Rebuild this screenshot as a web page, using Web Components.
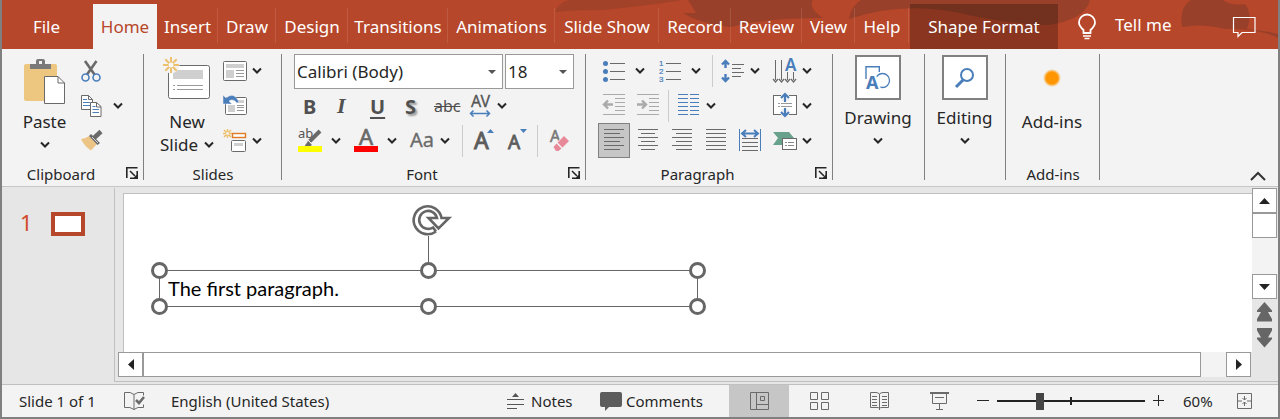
<!DOCTYPE html>
<html lang="en">
<head>
<meta charset="utf-8">
<title>Presentation editor</title>
<style>
html,body{margin:0;height:100%}
body{font-family:"Noto Sans","Open Sans",sans-serif;color:#262626;background:#e6e6e6}
</style>
</head>
<body>
<presentation-app></presentation-app>
<script>
const define = (name, html) => customElements.define(name, class extends HTMLElement {
  connectedCallback() {
    if (this.shadowRoot) return;
    const t = document.createElement('template');
    t.innerHTML = typeof html === 'function' ? html(this) : html;
    this.attachShadow({mode: 'open'}).append(t.content.cloneNode(true));
  }
});

const reset = `*{box-sizing:border-box}button{font:inherit;color:inherit;background:none;border:0;margin:0;padding:0}`;
const G = '#6a6a6a', B = '#4a7ebb', D = '#262626';
const hl = (list, c) => `<path d="${list.map(([x, y, w]) => `M${x} ${y}.5h${w}`).join('')}" stroke="${c || G}" fill="none"/>`;

/* name: [width, height, markup] */
const icons = {
  chev: [10, 6, `<path d="M1 .5l4 4 4-4" fill="none" stroke="${D}" stroke-width="2"/>`],
  collapse: [16, 10, `<path d="M1 9l7-7 7 7" fill="none" stroke="#333" stroke-width="2"/>`],
  launch: [12, 12, `<path d="M.8 11V.8h10.700" fill="none" stroke="${D}" stroke-width="1.6"/><path d="M4 4l5 5" stroke="${D}" stroke-width="1.6"/><path d="M12 4v8H4v-1.6h4L10.4 8V4z" fill="${D}"/>`],
  paste: [42, 46, `<rect y="5" width="33" height="37" rx="2" fill="#edc77f"/><path d="M6 5h6V2q0-2 2-2h5q2 0 2 2v3h6v5H6z" fill="#7a7a7a"/><rect x="15" y="2" width="3" height="3" fill="#f3f3f3"/><path d="M20.500 17.500H34L40.500 24V44.500H20.500z" fill="#fff" stroke="${G}"/><path d="M34 17.500V24h6.500" fill="none" stroke="${G}"/>`],
  cut: [20, 24, `<path d="M4 2l9.500 13.500M15.500 2L6 15.500" stroke="${G}" stroke-width="2.600"/><circle cx="4.500" cy="18.500" r="3.500" fill="none" stroke="${B}" stroke-width="1.600"/><circle cx="15.500" cy="18.500" r="3.500" fill="none" stroke="${B}" stroke-width="1.600"/>`],
  copy: [21, 23, `<path d="M.5 1.500h7l4 4V15.500H.5z" fill="#fff" stroke="${G}"/><path d="M7.500 1.500v4h4" fill="none" stroke="${G}"/><path d="M2 5.500h4M2 8.500h7M2 11.500h7" stroke="${B}"/><path d="M9.500 8.500h6l4.500 4V22.500H9.500z" fill="#fff" stroke="${G}"/><path d="M15.500 8.500v4.500H20" fill="none" stroke="${G}"/><path d="M11.500 12.500h3M11.500 15.500h6.500M11.500 18.500h6.500" stroke="${B}"/>`],
  brush: [23, 21, `<path d="M0 9q4 0 8-3l8 8q-2 2-6 6.500Q3 16 0 9z" fill="#ecc486"/><path d="M8 6l2-2 9 9-2.500 2z" fill="${G}"/><path d="M13 8L20 1.500" stroke="${G}" stroke-width="4.500"/><path d="M11 7l6 6" stroke="#f3f3f3" stroke-width=".8"/>`],
  newSlide: [48, 42, `<rect x="5.500" y="8.500" width="41" height="33" rx="2" fill="#fff" stroke="${G}"/><rect x="10" y="13" width="30" height="9" fill="#cfcfcf"/><path d="M10 28.500h2M14 28.500h26M10 32.500h2M14 32.500h26" stroke="#9a9a9a"/><circle cx="8" cy="8" r="8.500" fill="#f3f3f3"/><path d="M8 0v16M0 8h16M2.300 2.300l11.400 11.400M13.700 2.300L2.300 13.700" stroke="#edc06e" stroke-width="2"/><circle cx="8" cy="8" r="2.500" fill="#f8f8f8"/>`],
  layout: [24, 20, `<rect x=".5" y=".5" width="23" height="19" rx="1" fill="#fff" stroke="${G}"/><rect x="3" y="3" width="18" height="4" fill="#cfcfcf"/><rect x="3" y="9" width="8" height="8" fill="#cfcfcf"/>${hl([[13,9,8],[13,12,8],[13,15,8]], '#999')}`],
  reset: [24, 21, `<rect x="2.500" y="2.500" width="21" height="17" rx="1" fill="#fff" stroke="${G}"/><rect x="13" y="5" width="8" height="3" fill="#cfcfcf"/><rect x="5" y="10" width="7" height="7" fill="#cfcfcf"/>${hl([[14,10,7],[14,12,7],[14,15,7]], '#999')}<path d="M0 0v9h9L6 6q4-3 8 2l2-1Q11-4 3 3z" fill="${B}" stroke="#f3f3f3" stroke-width=".5"/>`],
  section: [24, 23, `<path d="M4.500 0v9M0 4.500h9M1 1l7 7M8 1L1 8" stroke="#edc06e" stroke-width="1.500"/><circle cx="4.500" cy="4.500" r="1.500" fill="#f3f3f3"/><rect x="9.500" y="4.500" width="13" height="4" fill="#fff" stroke="#e07b28" stroke-width="1.400"/><rect x="8.500" y="11.500" width="14" height="11" rx="1" fill="#fff" stroke="${G}"/><rect x="11" y="14" width="9" height="3" fill="#cfcfcf"/>`],
  spacing: [24, 22, `<text x="11.500" y="12" font-size="16" text-anchor="middle" fill="#555" stroke="#555" stroke-width=".3">AV</text><path d="M1 18.500h20M4.500 15.500l-3 3 3 3M17.500 15.500l3 3-3 3" fill="none" stroke="${B}" stroke-width="1.500"/>`],
  highlight: [24, 23, `<text x="0" y="9" font-size="13" fill="#555">ab</text><path d="M6 18l4-6 4 4-5 3z" fill="${G}"/><path d="M11 13L22 2" stroke="${G}" stroke-width="4"/><path d="M10 11l5 5" stroke="#f3f3f3"/><rect y="17" width="24" height="6" fill="#ff0"/>`],
  fontColor: [24, 23, `<text x="12" y="16" font-size="22" text-anchor="middle" fill="${G}" stroke="${G}" stroke-width=".7">A</text><rect y="17" width="24" height="6" fill="#f00"/>`],
  caseIcon: [26, 23, `<text x="0" y="18" font-size="20" fill="${G}" stroke="${G}" stroke-width=".3">Aa</text>`],
  grow: [20, 23, `<text x="0" y="20" font-size="23" fill="#5c5c5c" stroke="#5c5c5c" stroke-width=".9">A</text><path d="M13 4l3.500-4L20 4z" fill="${B}"/>`],
  shrink: [20, 23, `<text x="0" y="20" font-size="19" fill="#5c5c5c" stroke="#5c5c5c" stroke-width=".8">A</text><path d="M12 0h7l-3.500 4z" fill="${B}"/>`],
  clear: [20, 23, `<text x="0" y="13" font-size="16" fill="#777" stroke="#777" stroke-width=".5">A</text><path d="M3 17L14 6l6 6-11 11z" fill="#f3f3f3"/><path d="M7.500 13.500L14 7l5 5-6.500 6.500zM6.500 14.500l5 5-3 2.500H6L3.500 18z" fill="#e8899a"/>`],
  bullets: [24, 24, `<g fill="${B}"><circle cx="2.500" cy="4.500" r="2.500"/><circle cx="2.500" cy="12.500" r="2.500"/><circle cx="2.500" cy="20.500" r="2.500"/></g>${hl([[7,4,15],[7,12,15],[7,20,15]])}`],
  numbers: [24, 24, `<g fill="${B}" stroke="${B}" stroke-width=".2" font-size="8" font-family="Liberation Sans"><text y="7">1</text><text y="15">2</text><text y="23">3</text></g>${hl([[7,4,15],[7,12,15],[7,20,15]])}`],
  lineSpace: [24, 24, `<path d="M4.500 2v7M4.500 15v7M1 5.500L4.500 2 8 5.500M1 18.500L4.500 22 8 18.500" stroke="${B}" stroke-width="2.400" fill="none"/>${hl([[11,5,12],[11,9,9],[11,13,12],[11,17,9]])}`],
  direction: [24, 24, `<path d="M2.500 1v20M8.500 1v20M14.500 13v8M20.500 13v8" stroke="${G}"/><path d="M0 20l2.500 3L5 20M6 20l2.500 3L11 20M12 20l2.500 3L17 20M18 20l2.500 3L23 20" stroke="${G}" fill="none" stroke-width="1.300"/><text x="12" y="12" font-size="17" font-weight="600" fill="${B}">A</text>`],
  outdent: [23, 23, `${hl([[0,0,22],[12,4,10],[12,8,10],[12,12,10],[12,16,10],[0,20,22]], '#aaa')}<path d="M1 10.500h9M5 6.500l-4 4 4 4" stroke="#aaa" stroke-width="2.400" fill="none"/>`],
  indent: [23, 23, `${hl([[0,0,22],[12,4,10],[12,8,10],[12,12,10],[12,16,10],[0,20,22]], '#aaa')}<path d="M0 10.500h8M5 6.500l4 4-4 4" stroke="#aaa" stroke-width="2.400" fill="none"/>`],
  columns: [22, 23, hl([0,4,8,12,16,20].flatMap(y => [[0,y,10],[12,y,9]]), B)],
  vAlign: [24, 25, `<rect x=".5" y="2.500" width="23" height="19" fill="#fff" stroke="${G}"/>${hl([[5,10,2],[8,10,11],[5,13,2],[8,13,11]], '#999')}<path d="M8 0h8v8H8zM8 16h8v8H8z" fill="#f3f3f3"/><path d="M12 1v8M12 15v8M8 5l4-4 4 4M8 19l4 4 4-4" stroke="${B}" stroke-width="2.200" fill="none"/>`],
  left: [20, 22, hl([[0,0,20],[0,4,16],[0,8,20],[0,12,16],[0,16,20],[0,20,16]])],
  center: [20, 23, hl([[0,0,20],[3,4,14],[0,8,20],[3,12,14],[0,16,20],[3,20,14]])],
  right: [20, 23, hl([[0,0,20],[4,4,16],[0,8,20],[4,12,16],[0,16,20],[4,20,16]])],
  justify: [20, 23, hl([[0,0,20],[0,4,20],[0,8,20],[0,12,20],[0,16,20],[0,20,20]])],
  distribute: [22, 23, `<path d="M.5 0v22M21.500 0v22" stroke="${B}"/><path d="M3 4.500h16M7 1L3 4.500 7 8M15 1l4 3.500L15 8" stroke="${B}" stroke-width="2" fill="none"/>${hl([[3,9,16],[3,13,16],[3,17,16],[3,21,16]])}`],
  smartArt: [24, 19, `<path d="M0 1h16l5 6-5 7H0l5-7z" fill="#68a18c"/><rect x="9.500" y="7.500" width="14" height="11" fill="#fff" stroke="${G}"/>${hl([[12,11,2],[15,11,6],[12,14,2],[15,14,6]], '#888')}`],
  drawing: [24, 24, `<path d="M0 13V.7h13.300V6" fill="none" stroke="${B}" stroke-width="1.400"/><circle cx="16.500" cy="14.500" r="7" fill="none" stroke="${B}" stroke-width="1.300"/><path d="M0 23L4 9h6l5 14z" fill="#fff"/><text x="0" y="23" font-size="18" font-weight="700" fill="${B}">A</text>`],
  search: [20, 20, `<circle cx="12" cy="7" r="6" fill="none" stroke="${B}" stroke-width="2"/><path d="M8 12l-7 7" stroke="${B}" stroke-width="3"/>`],
  dot: [18, 18, `<defs><radialGradient id="g"><stop offset=".65" stop-color="#ff9500"/><stop offset="1" stop-color="#ff9500" stop-opacity="0"/></radialGradient></defs><circle cx="9" cy="9" r="9" fill="url(#g)"/>`],
  bulb: [18, 26, `<path d="M5.500 19v-3Q1 12 1 8.500a8 8 0 0116 0Q17 12 12.500 16v3z" fill="none" stroke="#fff" stroke-width="1.800"/><path d="M5 22h8M6.500 24.500h5" stroke="#fff" stroke-width="1.600"/>`],
  bubble: [23, 20, `<path d="M.5.500h21.500v15H9l-4 4v-4H.5z" fill="none" stroke="#fff" stroke-width="1.200"/>`],
  proof: [21, 18, `<path d="M10 2.500Q7-.5.500.5v15q6-1 9.500 2 3-3 9.500-2v-3M10 2.500v15M10 2.500Q13-.5 19.500.5v3" fill="none" stroke="${G}"/><path d="M12 8l3 3 5-6" fill="none" stroke="${G}" stroke-width="2.600"/>`],
  notes: [17, 17, `<path d="M5 4l3.500-4L12 4z" fill="#555"/>${hl([[0,6,17],[0,11,17],[0,15,10]], '#555')}`],
  comment: [22, 19, `<path d="M2 0h18q2 0 2 2v11q0 2-2 2H9l-4 4v-4H2q-2 0-2-2V2q0-2 2-2z" fill="#5c5c5c"/>`],
  normal: [19, 18, `<path d="M.5.500h18v17H.500zM6.500.500v17M6.500 12.500h12M10.500 4.500h4v4h-4z" fill="none" stroke="${G}"/>`],
  sorter: [19, 18, `<path d="M.5.500h7v7h-7zM11.500.500h7v7h-7zM.5 10.500h7v7h-7zM11.500 10.500h7v7h-7z" fill="none" stroke="${G}"/>`],
  reading: [19, 18, `<path d="M9.500 2Q8 .500 6 .500H.5v15H7q2 0 2.500 1Q10 15.500 12 15.500h6.500V.500H13Q11 .500 9.500 2zV18M2 4.500h5M2 7.500h5M2 10.500h5M2 13.500h5M12 4.500h5M12 7.500h5M12 10.500h5M12 13.500h5" fill="none" stroke="${G}"/>`],
  show: [19, 18, `<path d="M0 1h19" stroke="${G}" stroke-width="2"/><path d="M2.500 2v9.500h14V2M5 5.500h9M9.500 11.500v6M6 17.500h7" fill="none" stroke="${G}"/>`],
  minus: [12, 12, `<path d="M0 5.500h12" stroke="${D}"/>`],
  plus: [12, 12, `<path d="M0 5.500h11M5.500 0v11" stroke="${D}"/>`],
  fit: [15, 16, `<path d="M.5.500h14v15H.500zM7.500 3v4M5.500 5l2 2 2-2M7.500 13V9M5.500 11l2-2 2 2M1 8h4M10 8h4" fill="none" stroke="${G}"/>`],
  up: [11, 6, `<path d="M0 6l5.500-6L11 6z" fill="#222"/>`],
  down: [11, 6, `<path d="M0 0h11L5.500 6z" fill="#222"/>`],
  prev: [6, 11, `<path d="M6 0v11L0 5.500z" fill="#222"/>`],
  next: [6, 11, `<path d="M0 0v11l6-5.500z" fill="#222"/>`],
  prevSlide: [15, 20, `<path d="M7.500 0L15 8.500V10h-4l4 7v2.500H0V17l4-7H0V8.500z" fill="#666"/>`],
  nextSlide: [15, 20, `<path d="M7.500 19.500L15 11V9.500h-4l4-7V0H0v2.500l4 7H0V11z" fill="#666"/>`],
  rotate: [40, 33, `<g fill="none"><circle cx="16" cy="16" r="11.500" stroke="#fff" stroke-width="9"/><path d="M24 27.500A14 14 0 1 1 29.500 14H37L26.500 24.500 16.500 14H25A9 9 0 1 0 21 23.500L24 27.500" stroke="#666" stroke-width="2.600"/></g>`]
};
define('ui-icon', el => {
  const [w, h, body] = icons[el.getAttribute('name')];
  return `<style>:host{display:inline-block;flex:none;line-height:0}svg{display:block;overflow:visible}</style>
  <svg width="${w}" height="${h}" viewBox="0 0 ${w} ${h}" aria-hidden="true">${body}</svg>`;
});
const ic = n => `<ui-icon name="${n}"></ui-icon>`;
const ib = (n, label) => `<button type="button" aria-label="${label || n}">${ic(n)}</button>`;
const chev = ib('chev', 'More');

define('ribbon-tabs', `<style>${reset}
:host{display:block;position:relative;background:#b7472a;color:#fff;font-size:17px;line-height:24px;overflow:hidden}
.art{position:absolute;top:0;right:0}
nav{position:relative;display:grid;height:49px;align-items:stretch;
grid-template-columns:89px 66px 61px 58px 72px 100px 107px 104px 72px 71px 53px 54px 149px 1fr 24px 22px}
nav>button{margin-top:4px;white-space:nowrap;display:flex;align-items:center;justify-content:center}
.line{background:linear-gradient(#ffffff1c,#ffffff1c) right 4px/1px 35px no-repeat}
.on{background:#f3f3f3;color:#b7472a;margin-left:2px}
.ctx{background:#00000040;margin-left:1px}
.tell{justify-self:start;gap:19px;padding-left:20px}
.tell span{padding-bottom:3px}
</style>
<svg class="art" width="780" height="49" viewBox="500 0 780 49" aria-hidden="true"><g fill="#98402a">
<path d="M557 12Q562 0 575 0h110q-30 5-80 10-30 0-48 2z" opacity=".7"/>
<path d="M690 0h125q-5 8 10 18-60 0-92 9-30-3-48-14 15 0 13 0-3-5-8-13z"/>
<path d="M851 19Q853 6 863 0h229q-5 20-42 25-36-1-75-9Q910-1 851 19z"/>
<path d="M1184 27q-3-20 9-27h32q8 6 22 4 8 10 2 25 20 2 31 5v4q-20-10-53-9-22-6-43-2z"/></g></svg>
<nav role="tablist"><button role="tab">File</button><button class="on" role="tab" aria-selected="true">Home</button>
${['Insert','Draw','Design','Transitions','Animations','Slide Show','Record','Review','View','Help'].map(t => `<button class="line" role="tab">${t}</button>`).join('')}
<button class="ctx" role="tab">Shape Format</button><button class="tell">${ic('bulb')}<span>Tell me</span></button><button aria-label="Comments">${ic('bubble')}</button></nav>`);

define('ribbon-group', el => `<style>${reset}
:host{display:flex;flex-direction:column;flex:none;height:132px;background:linear-gradient(#808080,#808080) right top/1px 126px no-repeat}
.body{height:105px;display:flex}
footer{height:27px;display:flex;justify-content:center;align-items:center;font-size:15px;line-height:20px;padding-top:3px;position:relative}
:host([launcher]) footer{padding-right:24px}
.launch{position:absolute;right:6px;top:8px;line-height:0}
</style><div class="body"><slot></slot></div><footer>${el.getAttribute('label') || ''}${el.hasAttribute('launcher') ? `<button class="launch" aria-label="More options">${ic('launch')}</button>` : ''}</footer>`);

define('big-button', el => `<style>${reset}
:host{display:block}
button{width:100%;display:flex;flex-direction:column;align-items:center;font-size:17px;line-height:23px;white-space:nowrap}
.pic{height:56px;display:flex;align-items:center;justify-content:center}
:host([raised]) .pic{padding-bottom:8px}
:host([boxed]) .pic{width:46px;height:45px;background:#fff;border:2px solid #808080;margin:1px 0 6px}
.second{display:flex;align-items:center;justify-content:center;gap:6px;height:23px}
</style><button type="button"><span class="pic">${ic(el.getAttribute('icon'))}</span><span>${el.getAttribute('label')}</span>
${el.hasAttribute('single') ? '' : `<span class="second">${el.hasAttribute('second') ? `<span>${el.getAttribute('second')}</span>` : ''}${ic('chev')}</span>`}</button>`);

define('ribbon-bar', `<style>${reset}
:host{display:flex;padding-top:5px;background:#f3f3f3;border-bottom:1px solid #c6c6c6}
.row{display:grid;height:35px;align-items:center}
.row button,.row ui-icon{display:flex;align-items:center;width:max-content}
.tool .row{grid-template-columns:29px 10px}
.clip{width:142px}.slides{width:138px}.font{width:304px}.para{width:247px}.draw{width:92px}.edit{width:81px}.add{width:94px}
.clip big-button{width:69px;margin:0 2px 0 8px}
.clip .row{grid-template-columns:32px 10px}
.slides big-button{width:68px;margin:0 2px 0 9px}
.draw big-button,.edit big-button,.add big-button{width:100%;padding-right:2px}
.fields{display:flex;gap:2px;height:35px;padding-left:12px}
select{appearance:none;font:17px "Noto Sans",sans-serif;color:#262626;border:1px solid #999;border-radius:0;background:#fff;height:35px;padding:0 2px;margin:0}
.select{display:grid}
.select::after{content:"";grid-area:1/1;justify-self:end;align-self:center;border:4px solid transparent;border-top-color:#555;border-bottom:0;margin-right:7px}
.select select{grid-area:1/1}
.name{width:209px}.size{width:69px}
.row.f2{grid-template-columns:34px 33px 35px 29px 35px 28px 10px;padding-left:21px;font-size:20px;color:#505050}
.row.short{height:34px}
.f2 button{height:30px}
.f3{grid-template-columns:33px 23px 33px 23px 30px 22px 12px 34px 29px 13px 20px;padding-left:16px}
.sep{width:1px;height:32px;background:#ccc}
.b{font-weight:700}.i{font-family:"Liberation Serif",serif;font-style:italic;font-weight:700;font-size:22px}.u{text-decoration:underline;text-underline-offset:3px}.s{font-weight:700;text-shadow:2px 2px 2px #999}.x{font-size:16px;text-decoration:line-through}
.p1{grid-template-columns:32px 24px 32px 21px 9px 29px 23px 29px 10px;padding-left:17px}
.p2{grid-template-columns:34px 31px 10px 28px 67px 29px 10px;padding-left:17px}
.p3{grid-template-columns:40px 34px 34px 33px 34px 29px 10px;padding-left:12px}
.row .sel{width:32px;height:35px;background:#c6c6c6;border:1px solid #808080;justify-content:center;padding-bottom:1px}
.collapse{margin:auto 12px 5px auto;line-height:0}
</style>
<ribbon-group class="clip" label="Clipboard" launcher><big-button icon="paste" label="Paste"></big-button>
<div class="tool"><div class="row short">${ib('cut')}</div><div class="row">${ib('copy')}${chev}</div><div class="row">${ib('brush', 'Format painter')}</div></div></ribbon-group>
<ribbon-group class="slides" label="Slides"><big-button raised icon="newSlide" label="New" second="Slide"></big-button>
<div class="tool"><div class="row short">${ib('layout')}${chev}</div><div class="row">${ib('reset')}</div><div class="row">${ib('section')}${chev}</div></div></ribbon-group>
<ribbon-group class="font" label="Font" launcher><div>
<div class="fields"><span class="select"><select class="name" aria-label="Font"><option>Calibri (Body)</option></select></span><span class="select"><select class="size" aria-label="Font size"><option>18</option></select></span></div>
<div class="row short f2"><button class="b">B</button><button class="i">I</button><button class="u b">U</button><button class="s">S</button><button class="x">abc</button>${ib('spacing')}${chev}</div>
<div class="row f3">${ib('highlight')}${chev}${ib('fontColor')}${chev}${ib('caseIcon')}${chev}<i class="sep"></i>${ib('grow')}${ib('shrink')}<i class="sep"></i>${ib('clear')}</div>
</div></ribbon-group>
<ribbon-group class="para" label="Paragraph" launcher><div>
<div class="row short p1">${ib('bullets')}${chev}${ib('numbers')}${chev}<i class="sep"></i>${ib('lineSpace')}${chev}${ib('direction')}${chev}</div>
<div class="row p2">${ib('outdent')}${ib('indent')}<i class="sep"></i>${ib('columns')}${chev}${ib('vAlign')}${chev}</div>
<div class="row p3"><button class="sel" aria-label="Align left" aria-pressed="true">${ic('left')}</button>${ib('center')}${ib('right')}${ib('justify')}${ib('distribute')}${ib('smartArt')}${chev}</div>
</div></ribbon-group>
<ribbon-group class="draw"><big-button boxed icon="drawing" label="Drawing"></big-button></ribbon-group>
<ribbon-group class="edit"><big-button boxed icon="search" label="Editing"></big-button></ribbon-group>
<ribbon-group class="add" label="Add-ins"><big-button single raised icon="dot" label="Add-ins"></big-button></ribbon-group>
<button class="collapse" aria-label="Collapse ribbon">${ic('collapse')}</button>`);

define('text-frame', `<style>
:host{position:absolute;left:35px;top:76px;width:539px;height:37px;box-shadow:inset 0 0 0 1px #666;box-sizing:border-box}
p{margin:0;padding:6px 9px;font:20px/24px Lato,sans-serif;color:#000}
i{position:absolute;width:17px;height:17px;box-sizing:border-box;border:3px solid #666;border-radius:50%;background:#fff;margin:-8px}
.l{left:0}.c{left:calc(50% - 1px)}.r{right:0}.t{top:0}.b{bottom:0}
.stem{position:absolute;left:calc(50% - 1px);bottom:100%;height:36px;width:1px;background:#666}
.rot{position:absolute;left:calc(50% - 1px);top:-66px;margin-left:-16px}
</style><span class="stem"></span><ui-icon class="rot" name="rotate"></ui-icon><p><slot></slot></p>
<i class="l t"></i><i class="c t"></i><i class="r t"></i><i class="l b"></i><i class="c b"></i><i class="r b"></i>`);

define('slide-editor', `<style>${reset}
:host{flex:1;display:grid;grid-template-columns:112px 1fr;background:#e6e6e6;min-height:197px}
aside{display:flex;align-items:start;gap:18px;padding:21px 0 0 18px;font-size:22px;line-height:28px;color:#d04a2b}
.thumb{width:34px;height:24px;border:4px solid #b7472a;background:#fff;margin-top:4px}
.view{margin:1px 0 2px;border-left:1px solid #c0c0c0;display:grid;grid-template-columns:1fr 26px;grid-template-rows:1fr 25px 4px;padding-left:3px;min-width:0;border-bottom:1px solid #c0c0c0}
.slide{position:relative;margin:5px 0 0 5px;border:1px solid #c0c0c0;border-right:0;border-bottom:0;background:#fff}
.box{width:25px;height:25px;border:1px solid #999;background:#fff;display:flex;align-items:center;justify-content:center}
.h{display:flex;padding-right:1px}.h .t{flex:1;border:1px solid #999;background:#fff}.h .g{width:25px;background:#f3f3f3}
.v{display:flex;flex-direction:column;grid-row:1/4;grid-column:2}
.v .g{flex:none;height:36px;background:#f3f3f3}
.jump{width:25px;display:flex;justify-content:center;margin-top:3px;height:23px}
</style>
<aside><span>1</span><button class="thumb" aria-label="Slide 1"></button></aside>
<section class="view"><main class="slide"><text-frame>The first paragraph.</text-frame></main>
<div class="v"><button class="box" aria-label="Scroll up">${ic('up')}</button><span class="box"></span><span class="g"></span><button class="box" aria-label="Scroll down">${ic('down')}</button><button class="jump" aria-label="Previous slide">${ic('prevSlide')}</button><button class="jump" aria-label="Next slide">${ic('nextSlide')}</button></div>
<div class="h"><button class="box" aria-label="Scroll left">${ic('prev')}</button><span class="t"></span><span class="g"></span><button class="box" aria-label="Scroll right">${ic('next')}</button></div></section>`);

define('status-bar', `<style>${reset}
:host{display:flex;height:32px;border-top:1px solid #c0c0c0;background:#f3f3f3;font-size:15px;align-items:stretch;white-space:nowrap;line-height:32px}
button{display:flex;align-items:center}
.pages{width:122px;padding-left:17px}.lang{margin-left:26px}
.notes{margin-left:auto;gap:7px;width:93px}.comments{gap:4px;width:129px}
.view{width:60px;justify-content:center}.on{background:#c6c6c6}
.minus{margin-left:8px}
input{appearance:none;width:148px;margin:0 8px;height:32px;background:linear-gradient(#222,#222) center/2px 8px no-repeat,linear-gradient(#222,#222) center/100% 2px no-repeat}
input::-webkit-slider-thumb{appearance:none;width:8px;height:17px;background:#444}
.pct{margin-left:18px;width:54px}.fit{margin-right:26px}
</style>
<span class="pages">Slide 1 of 1</span><button aria-label="Proofing">${ic('proof')}</button><button class="lang">English (United States)</button>
<button class="notes">${ic('notes')}<span>Notes</span></button><button class="comments">${ic('comment')}<span>Comments</span></button>
<button class="view on" aria-label="Normal">${ic('normal')}</button><button class="view" aria-label="Slide sorter">${ic('sorter')}</button><button class="view" aria-label="Reading view">${ic('reading')}</button><button class="view" aria-label="Slide show">${ic('show')}</button>
<button class="minus" aria-label="Zoom out">${ic('minus')}</button><input type="range" min="0" max="100" value="28" aria-label="Zoom"><button aria-label="Zoom in">${ic('plus')}</button><button class="pct">60%</button><button class="fit" aria-label="Fit slide">${ic('fit')}</button>`);

define('presentation-app', `<style>
:host{display:flex;flex-direction:column;box-sizing:border-box;min-height:100vh;border:2px solid #808080;border-top:0}
</style><ribbon-tabs></ribbon-tabs><ribbon-bar></ribbon-bar><slide-editor></slide-editor><status-bar></status-bar>`);
</script>
</body>
</html>
